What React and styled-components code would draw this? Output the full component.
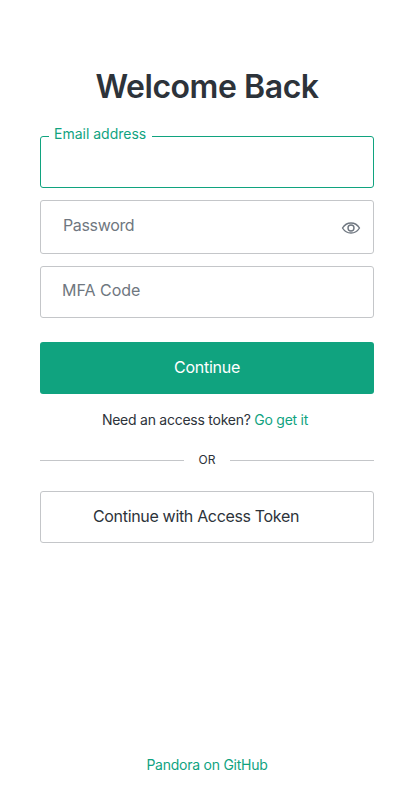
import React from "react";
import styled, { createGlobalStyle } from "styled-components";

const GlobalStyle = createGlobalStyle`
  html, body {
    margin: 0;
    padding: 0;
    background: #fff;
  }
  * {
    box-sizing: border-box;
  }
`;

const Page = styled.div`
  width: 414px;
  height: 800px;
  padding: 0 40px;
  display: flex;
  flex-direction: column;
  font-family: Inter, "Liberation Sans", sans-serif;
  color: #2d333a;
`;

const Title = styled.h1`
  margin: 67px 0 29px;
  height: 40px;
  font-size: 32px;
  line-height: 40px;
  font-weight: 600;
  letter-spacing: -0.45px;
  text-align: center;
  color: #2d333a;
`;

const Form = styled.form`
  display: flex;
  flex-direction: column;
`;

const Field = styled.div`
  position: relative;
  height: ${(p) => p.$height || 52}px;
  margin-bottom: 12px;
  border-radius: 3px;
  border: 1px solid ${(p) => (p.$active ? "#10a37f" : "#c4c6c9")};
  display: flex;
  align-items: center;
  justify-content: space-between;
  padding: 0 13px 5px ${(p) => p.$indent || 21}px;
`;

const FloatLabel = styled.label`
  position: absolute;
  left: 8px;
  top: -12px;
  padding: 0 6px 0 5px;
  background: #fff;
  font-size: 14px;
  line-height: 17px;
  color: #10a37f;
`;

const Placeholder = styled.span`
  font-size: 16px;
  line-height: 20px;
  letter-spacing: ${(p) => p.$spacing || 0}px;
  color: #6f7780;
`;

const EyeIcon = styled.svg`
  width: 20px;
  height: 20px;
  margin-top: 6px;
  margin-right: -1px;
  color: #6f7780;
  flex-shrink: 0;
`;

const PrimaryButton = styled.button`
  height: 52px;
  margin-top: 12px;
  padding: 0 0 2px;
  border: 0;
  border-radius: 3px;
  background: #10a37f;
  color: #fff;
  font-family: inherit;
  font-size: 16px;
  letter-spacing: -0.25px;
`;

const Hint = styled.p`
  margin: 17px 0 0;
  padding-right: 4px;
  font-size: 14px;
  line-height: 18px;
  letter-spacing: -0.25px;
  text-align: center;
  color: #2d333a;
`;

const GreenLink = styled.a`
  color: #10a37f;
  text-decoration: none;
`;

const Divider = styled.div`
  display: flex;
  align-items: center;
  margin-top: 23px;
  font-size: 12px;
  line-height: 16px;
  color: #2d333a;
  &::before,
  &::after {
    content: "";
    flex: 1;
    height: 1px;
    background: #c4c6c9;
  }
  span {
    padding: 0 15px;
  }
`;

const OutlineButton = styled.button`
  height: 52px;
  margin-top: 23px;
  padding: 0 0 2px 52px;
  border: 1px solid #c4c6c9;
  border-radius: 3px;
  background: #fff;
  color: #2d333a;
  font-family: inherit;
  font-size: 16px;
  letter-spacing: -0.33px;
  text-align: left;
`;

const Footer = styled.footer`
  margin-top: auto;
  padding-bottom: 26px;
  font-size: 14px;
  line-height: 18px;
  letter-spacing: -0.25px;
  text-align: center;
`;

export default function App() {
  return (
    <>
      <GlobalStyle />
      <Page>
        <Title>Welcome Back</Title>
        <Form>
          <Field $active>
            <FloatLabel>Email address</FloatLabel>
          </Field>
          <Field $height={54} $indent={22}>
            <Placeholder $spacing={-0.35}>Password</Placeholder>
            <EyeIcon viewBox="0 0 20 20" fill="none" stroke="currentColor" strokeWidth="1.4">
              <path d="M1.5 10C3.6 6.6 6.5 5 10 5s6.4 1.6 8.5 5c-2.1 3.4-5 5-8.5 5s-6.4-1.6-8.5-5z" strokeLinejoin="round" />
              <circle cx="10" cy="10" r="3" />
            </EyeIcon>
          </Field>
          <Field>
            <Placeholder>MFA Code</Placeholder>
          </Field>
          <PrimaryButton type="button">Continue</PrimaryButton>
        </Form>
        <Hint>
          Need an access token? <GreenLink href="#">Go get it</GreenLink>
        </Hint>
        <Divider>
          <span>OR</span>
        </Divider>
        <OutlineButton type="button">Continue with Access Token</OutlineButton>
        <Footer>
          <GreenLink href="#">Pandora on GitHub</GreenLink>
        </Footer>
      </Page>
    </>
  );
}
